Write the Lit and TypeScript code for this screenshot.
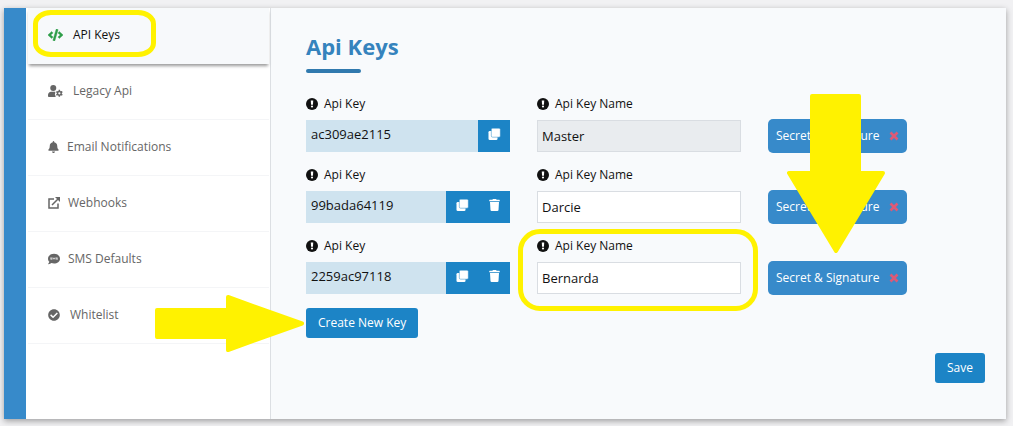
import { LitElement, html, css, svg, nothing, TemplateResult } from "lit";
import { customElement, property } from "lit/decorators.js";

const icon = (cls: string, box: string, body: TemplateResult) =>
  html`<svg class="icon ${cls}" viewBox=${box} aria-hidden="true">${body}</svg>`;

const codeIcon = () => icon("code", "0 0 640 512", svg`<path stroke="currentColor" stroke-width="16" d="M278.9 511.5l-61-17.7c-6.4-1.8-10-8.5-8.2-14.9L346.2 8.7c1.8-6.4 8.5-10 14.9-8.2l61 17.7c6.4 1.8 10 8.5 8.2 14.9L293.8 503.3c-1.9 6.4-8.5 10.1-14.9 8.2zm-114-112.2l43.5-46.4c4.6-4.9 4.3-12.7-.8-17.2L117 256l90.6-79.7c5.1-4.5 5.5-12.3.8-17.2l-43.5-46.4c-4.5-4.8-12.1-5.1-17-.5L3.8 247.2c-5.1 4.7-5.1 12.8 0 17.5l144.1 135.1c4.9 4.6 12.5 4.4 17-.5zm327.2.6l144.1-135.1c5.1-4.7 5.1-12.8 0-17.5L492.1 112.1c-4.8-4.5-12.4-4.3-17 .5L431.6 159c-4.6 4.9-4.3 12.7.8 17.2L523 256l-90.6 79.7c-5.1 4.5-5.5 12.3-.8 17.2l43.5 46.4c4.5 4.9 12.1 5.1 17 .6z"/>`);

const userCogIcon = () => icon("user", "0 0 640 512", svg`
  <circle cx="224" cy="128" r="128"/>
  <path d="M134 288h140c20 0 30 4 44 10-14 20-18 40-10 58-22 30-16 70 12 98v26c0 14 6 24 14 32H48c-26 0-48-22-48-48v-42c0-74 60-134 134-134z"/>
  <path fill-rule="evenodd" d="M456 206h56l10 46 28 16 46-14 30 52-36 32v32l36 32-30 52-46-14-28 16-10 46h-56l-10-46-28-16-46 14-30-52 36-32v-32l-36-32 30-52 46 14 28-16zM484 306a48 48 0 1 0 0 96 48 48 0 1 0 0-96z"/>`);

const bellIcon = () => icon("bell", "0 0 448 512", svg`<path d="M224 512c35.32 0 63.97-28.65 63.97-64H160.03c0 35.35 28.65 64 63.97 64zm215.39-149.71c-19.32-20.76-55.47-51.99-55.47-154.29 0-77.7-54.48-139.9-127.94-155.16V32c0-17.67-14.32-32-31.98-32s-31.98 14.33-31.98 32v20.84C118.56 68.1 64.08 130.3 64.08 208c0 102.3-36.15 133.53-55.47 154.29-6 6.45-8.66 14.16-8.61 21.71.11 16.4 12.98 32 32.1 32h383.8c19.12 0 32-15.6 32.1-32 .05-7.55-2.61-15.27-8.61-21.71z"/>`);

const linkIcon = () => icon("square", "0 0 24 24", svg`
  <path d="M12 4H2v18h18v-9M8 16L20 4" fill="none" stroke="currentColor" stroke-width="3"/>
  <path d="M14 0h10v10z"/>`);

const smsIcon = () => icon("square", "0 0 512 512", svg`
  <path d="M256 32C115 32 0 125 0 240c0 50 21 95 57 131-12 50-53 94-54 95-4 5-3 14 5 14 66 0 116-32 140-51 33 12 69 19 108 19 141 0 256-93 256-208S397 32 256 32z"/>
  <path d="M156 202h-42v34h38v36h-44M212 280v-80l44 50 44-50v80M404 202h-42v34h38v36h-44" fill="none" stroke="#fff" stroke-width="30"/>`);

const checkIcon = () => icon("square", "0 0 512 512", svg`<path d="M504 256c0 136.967-111.033 248-248 248S8 392.967 8 256 119.033 8 256 8s248 111.033 248 248zM227.314 387.314l184-184c6.248-6.248 6.248-16.379 0-22.627l-22.627-22.627c-6.248-6.249-16.379-6.249-22.628 0L216 308.118l-70.059-70.059c-6.248-6.248-16.379-6.248-22.628 0l-22.627 22.627c-6.248 6.248-6.248 16.379 0 22.627l104 104c6.249 6.249 16.379 6.249 22.628.001z"/>`);

const infoIcon = () => icon("square", "0 0 24 24", svg`
  <circle cx="12" cy="12" r="12"/>
  <path d="M9.5 5h5l-.6 8.500h-3.800z" fill="#fff"/><circle cx="12" cy="17" r="2.200" fill="#fff"/>`);

const cloneIcon = () => icon("tool", "0 0 512 512", svg`
  <rect x="0" y="128" width="384" height="384" rx="56"/>
  <rect x="120" y="8" width="384" height="384" rx="56" stroke="#1c84c6" stroke-width="20"/>`);

const trashIcon = () => icon("tool", "0 0 448 512", svg`<path d="M432 32H312l-9.400-18.700A24 24 0 0 0 281.100 0H166.800a23.720 23.720 0 0 0-21.400 13.300L136 32H16A16 16 0 0 0 0 48v32a16 16 0 0 0 16 16h416a16 16 0 0 0 16-16V48a16 16 0 0 0-16-16zM32 128l21.200 339a48 48 0 0 0 47.900 45h245.800a48 48 0 0 0 47.900-45L416 128z"/>`);

const crossIcon = () => icon("cross", "0 0 10 10", svg`<path d="M1.500 1.500l7 7M8.500 1.500l-7 7" stroke="currentColor" stroke-width="2.600"/>`);

const base = css`
  :host { display: block; font-family: "Open Sans", "Noto Sans", sans-serif; font-size: 12px; line-height: 16px; color: #111; }
  *, *::before { box-sizing: border-box; }
  button, input { font: inherit; margin: 0; border: 0; }
  .icon { display: block; flex: none; fill: currentColor; width: 12px; height: 12px; }
  .mark { position: absolute; pointer-events: none; border: 5px solid #fff200; z-index: 2; }
`;

@customElement("side-nav")
class SideNav extends LitElement {
  static styles = [base, css`
    :host { background: #fff; border-right: 1px solid #dcdfe3; }
    ul { list-style: none; margin: 0; padding: 0 1px 0 2px; }
    .item { position: relative; height: 56px; border-bottom: 1px solid #f4f5f7; }
    .link { display: flex; align-items: center; gap: 8px; height: 100%; padding: 0 0 2px 20px; color: #666; font-weight: 500; text-decoration: none; }
    .item.active { background: #f7f9fb; border-bottom: 0; box-shadow: 0 3px 3px -1px rgba(0, 0, 0, 0.4); }
    .active .link { color: #111; }
    .active .icon { color: #2e9e49; }
    .wide { gap: 10px; }
    .code, .user { width: 15px; }
    .bell { width: 11px; }
    .mark { left: 5px; top: 2px; width: 123px; height: 47px; border-radius: 18px / 14px; }
  `];

  items = [
    { label: "API Keys", glyph: codeIcon, wide: true, active: true },
    { label: "Legacy Api", glyph: userCogIcon, wide: true },
    { label: "Email Notifications", glyph: bellIcon },
    { label: "Webhooks", glyph: linkIcon },
    { label: "SMS Defaults", glyph: smsIcon },
    { label: "Whitelist", glyph: checkIcon, wide: true },
  ];

  render() {
    return html`<nav><ul>${this.items.map((i) => html`
      <li class="item ${i.active ? "active" : ""}">
        <a class="link ${i.wide ? "wide" : ""}" href="#">${i.glyph()}<span>${i.label}</span></a>
        ${i.active ? html`<div class="mark"></div>` : nothing}
      </li>`)}</ul></nav>`;
  }
}

@customElement("key-row")
class KeyRow extends LitElement {
  @property() key = "";
  @property() name = "";
  @property({ type: Boolean }) master = false;
  @property({ type: Boolean }) marked = false;

  static styles = [base, css`
    .row { display: grid; grid-template-columns: repeat(3, minmax(0, 1fr)); column-gap: 27px; align-items: end; }
    .field { position: relative; }
    .label { display: flex; align-items: center; gap: 6px; margin-bottom: 8px; }
    .group { display: flex; height: 32px; }
    .key { flex: 1; min-width: 0; background: #cfe3ef; padding: 0 5px 5px; font-size: 13px; color: #111; }
    .tool { display: grid; place-items: center; width: 32px; padding: 0 0 2px; background: #1c84c6; color: #fff; }
    .tool .icon { width: 15px; height: 14px; }
    .name { display: block; width: 100%; height: 32px; padding: 0 4px; border: 1px solid #d9dde2; background: #fff; font-size: 13px; color: #111; }
    .name:disabled { background: #e9ecef; }
    .secret { display: flex; align-items: center; justify-self: start; gap: 10px; height: 34px; padding: 0 8px; border-radius: 5px; background: #378aca; color: #fff; white-space: nowrap; }
    .end { position: relative; display: flex; margin-bottom: -1px; }
    .cross { width: 10px; height: 10px; color: #dd5a76; }
    .mark { inset: -9px -17px -17px -19px; border-radius: 22px; }
    .arrow { position: absolute; z-index: 2; left: 19px; bottom: 42px; width: 98px; height: 159px; fill: #fff200; stroke: #fff200; stroke-width: 4; stroke-linejoin: round; pointer-events: none; }
  `];

  render() {
    return html`<div class="row">
      <div class="field">
        <label class="label" for="key">${infoIcon()}Api Key</label>
        <div class="group">
          <input id="key" class="key" readonly .value=${this.key} />
          <button class="tool" aria-label="Copy">${cloneIcon()}</button>
          ${this.master ? nothing : html`<button class="tool" aria-label="Delete">${trashIcon()}</button>`}
        </div>
      </div>
      <div class="field">
        <label class="label" for="name">${infoIcon()}Api Key Name</label>
        <input id="name" class="name" .value=${this.name} ?disabled=${this.master} />
        ${this.marked ? html`<div class="mark"></div>` : nothing}
      </div>
      <div class="end">
        <button class="secret">Secret &amp; Signature ${crossIcon()}</button>
        ${this.marked ? html`<svg class="arrow" viewBox="0 0 98 159" aria-hidden="true"><path d="M25 2h47v77h24L49 157 2 79h23z"/></svg>` : nothing}
      </div>
    </div>`;
  }
}

@customElement("app-root")
class AppRoot extends LitElement {
  static styles = [base, css`
    :host { background: #f1f1f3; padding: 8px 7px 7px 4px; min-height: 100vh; box-sizing: border-box; display: flex; }
    .panel { flex: 1; display: grid; grid-template-columns: 22px 245px minmax(0, 1fr); background: #f8fafc; box-shadow: 0 2px 6px rgba(0, 0, 0, 0.35); }
    .strip { background: #378aca; }
    .main { padding: 23px 34px 0 35px; }
    .title { margin: 0; font-size: 22px; line-height: 30px; font-weight: 700; color: #3583bd; }
    .title::after { content: ""; display: block; width: 55px; height: 4px; margin-top: 8px; border-radius: 2px; background: #3079ae; }
    .rows { display: grid; gap: 15px; margin-top: 23px; }
    .create { position: relative; width: max-content; margin-top: 14px; }
    .btn { display: block; height: 30px; padding: 0 12px; border-radius: 3px; background: #1c84c6; color: #fff; white-space: nowrap; }
    .arrow { position: absolute; z-index: 2; right: calc(100% + 2px); top: -13px; width: 149px; height: 57px; fill: #fff200; stroke: #fff200; stroke-width: 4; stroke-linejoin: round; pointer-events: none; }
    .foot { display: flex; justify-content: flex-end; margin: 15px -13px 0 0; }
  `];

  keys = [
    { key: "ac309ae2115", name: "Master", master: true },
    { key: "99bada64119", name: "Darcie" },
    { key: "2259ac97118", name: "Bernarda", marked: true },
  ];

  render() {
    return html`<div class="panel">
      <div class="strip"></div>
      <side-nav></side-nav>
      <main class="main">
        <h1 class="title">Api Keys</h1>
        <div class="rows">${this.keys.map((k) => html`
          <key-row .key=${k.key} .name=${k.name} ?master=${k.master} ?marked=${k.marked}></key-row>`)}
        </div>
        <div class="create">
          <button class="btn">Create New Key</button>
          <svg class="arrow" viewBox="0 0 149 57" aria-hidden="true"><path d="M2 15h71V2l74 26.500L73 55V42H2z"/></svg>
        </div>
        <div class="foot"><button class="btn">Save</button></div>
      </main>
    </div>`;
  }
}
